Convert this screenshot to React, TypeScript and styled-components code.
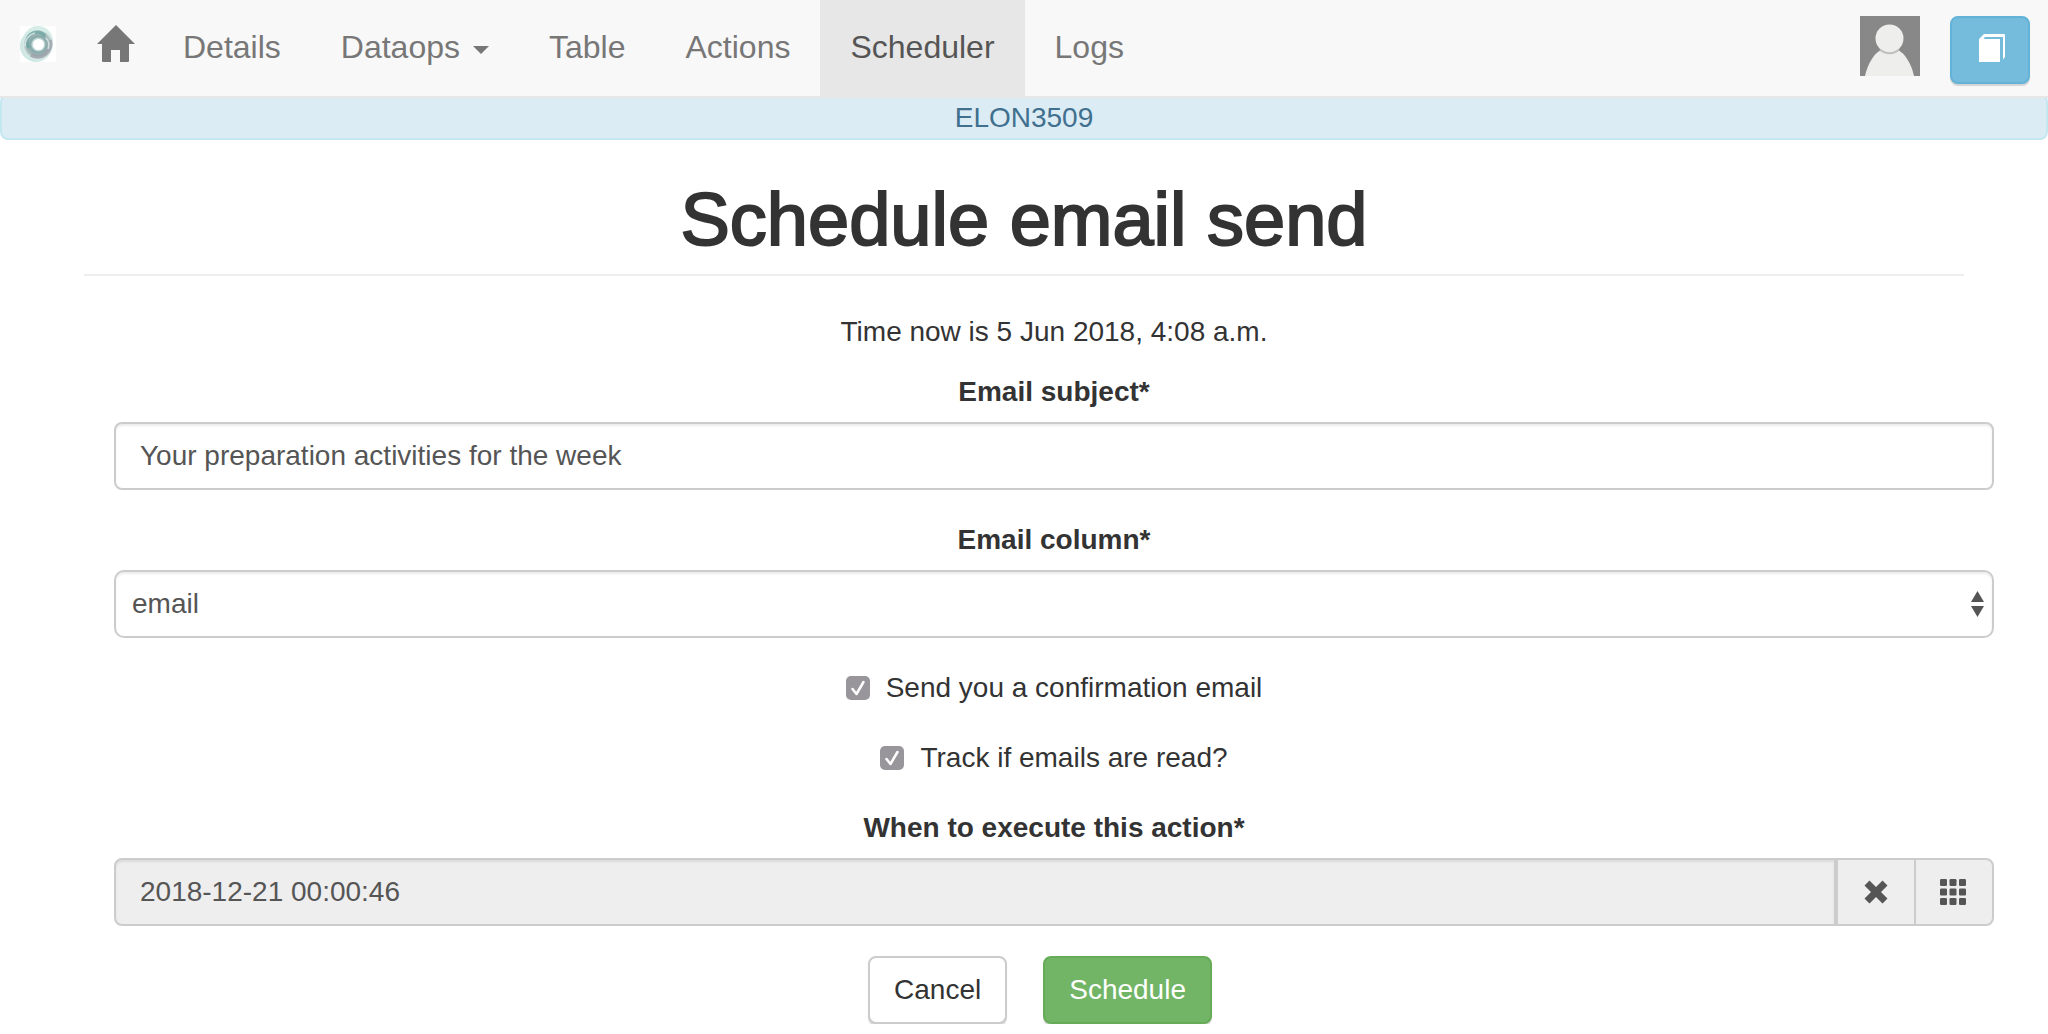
import React, { useState } from "react";
import styled, { createGlobalStyle } from "styled-components";

const GlobalStyle = createGlobalStyle`
  *, *::before, *::after { box-sizing: border-box; }
  body {
    margin: 0;
    background: #fff;
    color: #333;
    font-family: "Liberation Sans", Arial, Helvetica, sans-serif;
    font-size: 28px;
    line-height: 40px;
  }
  button, input, select { font: inherit; }
`;

const Navbar = styled.nav`
  position: relative;
  z-index: 1;
  display: flex;
  align-items: flex-start;
  background: #f8f8f8;
  border-bottom: 2px solid #e7e7e7;
`;

const Brand = styled.a`
  display: flex;
  padding: 26px 10px 34px 20px;
`;

const NavLinks = styled.ul`
  display: flex;
  flex: 1;
  margin: 0;
  padding: 0;
  list-style: none;
`;

const NavLink = styled.a<{ $active?: boolean }>`
  display: flex;
  align-items: center;
  height: 96px;
  padding: 0 30px 2px;
  font-size: 32px;
  color: ${(p) => (p.$active ? "#555" : "#777")};
  background: ${(p) => (p.$active ? "#e7e7e7" : "transparent")};
  text-decoration: none;
`;

const HomeLink = styled.a`
  display: flex;
  padding: 25px 18px 33px 31px;
`;

const Caret = styled.span`
  margin: 6px 0 0 13px;
  border-top: 8px solid currentColor;
  border-left: 8px solid transparent;
  border-right: 8px solid transparent;
`;

const NavTools = styled.div`
  display: flex;
  align-items: flex-start;
  gap: 30px;
  padding: 16px 18px 0 0;
  height: 96px;
`;

const ManualButton = styled.button`
  display: flex;
  align-items: flex-start;
  justify-content: center;
  width: 80px;
  height: 68px;
  padding: 16px 0 0 4px;
  background: #75bcdc;
  border: 2px solid #63b3d8;
  border-radius: 8px;
  box-shadow: 0 2px 1px rgba(0, 0, 0, 0.15);
`;

const WorkflowBar = styled.div`
  margin-top: -4px;
  padding: 2px 0 0;
  height: 46px;
  text-align: center;
  color: #41708f;
  background: #dcecf5;
  border: 2px solid #c3e8f0;
  border-radius: 8px;
`;

const Page = styled.main`
  padding: 40px 84px 0;
`;

const Title = styled.h1`
  margin: 0 0 36px;
  padding-bottom: 14px;
  border-bottom: 2px solid #eee;
  font-size: 74px;
  line-height: 80px;
  font-weight: 400;
  text-align: center;
  -webkit-text-stroke: 2px #333;
`;

const Form = styled.form`
  display: flex;
  flex-direction: column;
  gap: 30px;
  margin: 0 -30px 0 30px;
`;

const Intro = styled.div`
  display: flex;
  flex-direction: column;
  gap: 20px;
`;

const Clock = styled.p`
  margin: 0;
  text-align: center;
`;

const Field = styled.div`
  display: flex;
  flex-direction: column;
  gap: 10px;
`;

const FieldLabel = styled.label`
  text-align: center;
  font-weight: 700;
`;

const TextInput = styled.input`
  width: 100%;
  height: 68px;
  padding: 0 24px;
  color: #555;
  background: #fff;
  border: 2px solid #ccc;
  border-radius: 8px;
  box-shadow: inset 0 2px 2px rgba(0, 0, 0, 0.075);
  outline: none;
  &:read-only { background: #eee; }
`;

const SelectWrap = styled.div`
  position: relative;
`;

const Select = styled.select`
  appearance: none;
  display: block;
  width: 100%;
  height: 68px;
  padding: 0 40px 0 16px;
  color: #555;
  background: #fff;
  border: 2px solid #ccc;
  border-radius: 10px;
  box-shadow: inset 0 2px 2px rgba(0, 0, 0, 0.075);
`;

const SelectArrows = styled.svg`
  position: absolute;
  top: 21px;
  right: 10px;
  pointer-events: none;
`;

const CheckRow = styled.label`
  display: flex;
  justify-content: center;
  align-items: center;
  gap: 16px;
`;

const Checkbox = styled.input`
  appearance: none;
  width: 24px;
  height: 24px;
  margin: 0;
  border-radius: 5px;
  background: #98969b;
  &:not(:checked) { background: #fff; border: 1px solid #98969b; }
  &:checked {
    background: #98969b url("data:image/svg+xml,%3Csvg xmlns='http://www.w3.org/2000/svg' viewBox='0 0 24 24'%3E%3Cpath d='M6.500 13l4 5L17.500 6' fill='none' stroke='white' stroke-width='2.500' stroke-linecap='round' stroke-linejoin='round'/%3E%3C/svg%3E");
  }
`;

const InputGroup = styled.div`
  display: flex;
  & > input { border-radius: 8px 0 0 8px; flex: 1; min-width: 0; }
`;

const Addon = styled.button<{ $last?: boolean }>`
  display: flex;
  align-items: center;
  justify-content: center;
  width: ${(p) => (p.$last ? "80px" : "78px")};
  height: 68px;
  padding: ${(p) => (p.$last ? "0 2px 0 0" : "0")};
  color: #555;
  background: #eee;
  border: 2px solid #ccc;
  border-right-width: ${(p) => (p.$last ? "2px" : "0")};
  border-radius: ${(p) => (p.$last ? "0 8px 8px 0" : "0")};
`;

const Actions = styled.div`
  display: flex;
  justify-content: center;
  gap: 36px;
  padding-right: 28px;
`;

const ActionButton = styled.button<{ $primary?: boolean }>`
  height: 68px;
  padding: 0 24px;
  color: ${(p) => (p.$primary ? "#fff" : "#333")};
  background: ${(p) => (p.$primary ? "#72b566" : "#fff")};
  border: 2px solid ${(p) => (p.$primary ? "#66ac58" : "#ccc")};
  border-radius: 8px;
  box-shadow: 0 2px 1px rgba(0, 0, 0, 0.15);
`;

const Logo = () => (
  <svg width="36" height="36" viewBox="0 0 36 36" aria-hidden="true">
    <defs>
      <radialGradient id="ring" cx="0.5" cy="0.5" r="0.5">
        <stop offset="0.34" stopColor="#a5c8c6" />
        <stop offset="0.5" stopColor="#85a9a9" />
        <stop offset="0.75" stopColor="#a3b5b7" />
        <stop offset="0.9" stopColor="#bccfce" />
        <stop offset="1" stopColor="#e2f2ef" />
      </radialGradient>
    </defs>
    <rect width="36" height="36" fill="#fff" />
    <circle cx="18" cy="15" r="15" fill="#d5ece7" />
    <circle cx="16" cy="20" r="16" fill="#cfe8e3" />
    <circle cx="18" cy="18.500" r="15" fill="url(#ring)" />
    <path d="M9 22A10 10 0 0 1 25 10" fill="none" stroke="#4f9c93" strokeWidth="3" opacity="0.55" />
    <path d="M5 20A13 13 0 0 1 15 7" fill="none" stroke="#e0efed" strokeWidth="1.500" opacity="0.8" />
    <path d="M30 14a13 13 0 0 1-19 15" fill="none" stroke="#9997a4" strokeWidth="4" opacity="0.6" />
    <path d="M26 12a10 10 0 0 1 2 11" fill="none" stroke="#dff0ee" strokeWidth="1.500" opacity="0.8" />
    <circle cx="18.500" cy="18.500" r="7" fill="#fff" opacity="0.4" />
    <circle cx="18.500" cy="18.500" r="5.500" fill="#fff" />
  </svg>
);

const HomeIcon = () => (
  <svg width="38" height="38" viewBox="0 0 38 38" fill="#777" aria-hidden="true">
    <path d="M19 0l19 19h-6v17a1 1 0 0 1-1 1h-8V25h-9v12H6a1 1 0 0 1-1-1V19H0z" />
  </svg>
);

const Avatar = () => (
  <svg width="60" height="60" viewBox="0 0 60 60" role="img" aria-label="User">
    <rect width="60" height="60" fill="#888" />
    <path d="M5 60C8 46 15 37 21 34h17c6 3 13 12 16 26z" fill="#eeeeec" />
    <circle cx="29.500" cy="22.500" r="14" fill="#eeeeec" />
    <path d="M20 33.500a14 14 0 0 0 19 0" fill="none" stroke="#c0c0be" strokeWidth="2" />
  </svg>
);

const BookIcon = () => (
  <svg width="26" height="28" viewBox="0 0 26 28" aria-hidden="true">
    <path
      d="M5 0h20a1 1 0 0 1 1 1v22l-2 2.500V3H6L4.500 5H21v23H0V5z"
      fill="#fff"
    />
  </svg>
);

const RemoveIcon = () => (
  <svg width="24" height="24" viewBox="0 0 24 24" aria-hidden="true">
    <path
      fill="currentColor"
      d="M5.500 .5L12 7 18.500 .5l5 5L17 12l6.500 6.500-5 5L12 17l-6.500 6.500-5-5L7 12 .5 5.500z"
    />
  </svg>
);

const GridIcon = () => (
  <svg width="26" height="26" viewBox="0 0 26 26" fill="currentColor" aria-hidden="true">
    {[0, 9.5, 19].map((y) =>
      [0, 9.5, 19].map((x) => <rect key={`${x}-${y}`} x={x} y={y} width="7" height="7" rx="1.3" />)
    )}
  </svg>
);

const links = ["Details", "Dataops", "Table", "Actions", "Scheduler", "Logs"];

export default function App() {
  const [subject, setSubject] = useState("Your preparation activities for the week");
  const [when, setWhen] = useState("2018-12-21 00:00:46");

  return (
    <>
      <GlobalStyle />
      <Navbar>
        <Brand href="#" aria-label="OnTask">
          <Logo />
        </Brand>
        <NavLinks>
          <li>
            <HomeLink href="#" aria-label="Home">
              <HomeIcon />
            </HomeLink>
          </li>
          {links.map((name) => (
            <li key={name}>
              <NavLink href="#" $active={name === "Scheduler"}>
                {name}
                {name === "Dataops" && <Caret />}
              </NavLink>
            </li>
          ))}
        </NavLinks>
        <NavTools>
          <Avatar />
          <ManualButton type="button" aria-label="Documentation">
            <BookIcon />
          </ManualButton>
        </NavTools>
      </Navbar>
      <WorkflowBar>ELON3509</WorkflowBar>
      <Page>
        <Title>Schedule email send</Title>
        <Form onSubmit={(e) => e.preventDefault()}>
          <Intro>
            <Clock>Time now is 5 Jun 2018, 4:08 a.m.</Clock>
            <Field>
              <FieldLabel htmlFor="subject">Email subject*</FieldLabel>
              <TextInput id="subject" value={subject} onChange={(e) => setSubject(e.target.value)} />
            </Field>
          </Intro>
          <Field>
            <FieldLabel htmlFor="column">Email column*</FieldLabel>
            <SelectWrap>
              <Select id="column" defaultValue="email">
                <option value="email">email</option>
              </Select>
              <SelectArrows width="13" height="26" viewBox="0 0 13 26" fill="#555" aria-hidden="true">
                <path d="M6.500 0L13 11H0zM0 15h13L6.500 26z" />
              </SelectArrows>
            </SelectWrap>
          </Field>
          <CheckRow>
            <Checkbox type="checkbox" defaultChecked />
            Send you a confirmation email
          </CheckRow>
          <CheckRow>
            <Checkbox type="checkbox" defaultChecked />
            Track if emails are read?
          </CheckRow>
          <Field>
            <FieldLabel htmlFor="when">When to execute this action*</FieldLabel>
            <InputGroup>
              <TextInput id="when" readOnly value={when} />
              <Addon type="button" aria-label="Clear" onClick={() => setWhen("")}>
                <RemoveIcon />
              </Addon>
              <Addon type="button" aria-label="Pick a date" $last>
                <GridIcon />
              </Addon>
            </InputGroup>
          </Field>
          <Actions>
            <ActionButton type="button">Cancel</ActionButton>
            <ActionButton type="submit" $primary>
              Schedule
            </ActionButton>
          </Actions>
        </Form>
      </Page>
    </>
  );
}
